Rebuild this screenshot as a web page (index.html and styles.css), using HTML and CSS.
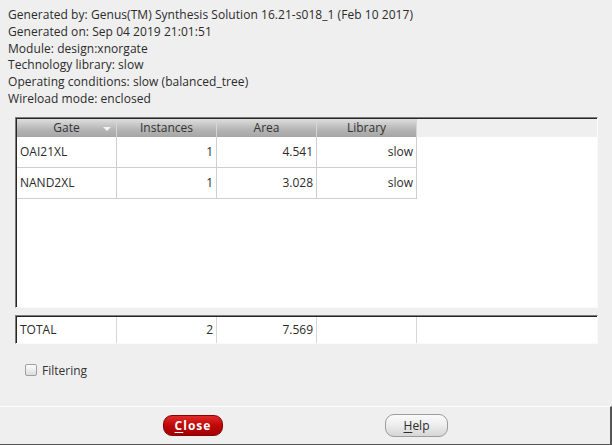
FILE: index.html
```html
<!DOCTYPE html>
<html lang="en">
<head>
    <meta charset="UTF-8">
    <title>Gate Report</title>
    <link rel="stylesheet" href="styles.css">
</head>
<body>
    <div class="dialog">
        <div class="info">
            <div>Generated by: Genus(TM) Synthesis Solution 16.21-s018_1 (Feb 10 2017)</div>
            <div>Generated on: Sep 04 2019 21:01:51</div>
            <div>Module: design:xnorgate</div>
            <div>Technology library: slow</div>
            <div>Operating conditions: slow (balanced_tree)</div>
            <div>Wireload mode: enclosed</div>
        </div>

        <div class="frame gates-frame">
            <div class="head">
                <div class="hcell">Gate<span class="sort"></span></div>
                <div class="hcell">Instances</div>
                <div class="hcell">Area</div>
                <div class="hcell">Library</div>
            </div>
            <div class="rows">
                <div class="row">
                    <div class="cell">OAI21XL</div>
                    <div class="cell num">1</div>
                    <div class="cell num">4.541</div>
                    <div class="cell num">slow</div>
                </div>
                <div class="row">
                    <div class="cell">NAND2XL</div>
                    <div class="cell num">1</div>
                    <div class="cell num">3.028</div>
                    <div class="cell num">slow</div>
                </div>
            </div>
        </div>

        <div class="frame total-frame">
            <div class="row total">
                <div class="cell">TOTAL</div>
                <div class="cell num">2</div>
                <div class="cell num">7.569</div>
                <div class="cell"></div>
                <div class="cell rest"></div>
            </div>
        </div>

        <label class="filter"><span class="check"></span>Filtering</label>

        <div class="buttons">
            <button class="btn close"><u>C</u>lose</button>
            <button class="btn help"><u>H</u>elp</button>
        </div>
    </div>
</body>
</html>
```

FILE: styles.css
```css
html, body {
    margin: 0;
    background: #efefef;
}
body {
    font-family: 'Open Sans', 'Noto Sans', sans-serif;
    font-size: 12px;
    color: #2b2b2b;
    width: 612px;
    height: 445px;
    overflow: hidden;
}
.dialog {
    display: flex;
    flex-direction: column;
    height: 445px;
}
.info {
    padding: 7px 0 0 8px;
    line-height: 16.8px;
    height: 103px;
    letter-spacing: 0.05px;
}
.frame {
    margin-left: 15px;
    width: 583px;
    box-sizing: border-box;
    border-top: 1px solid #7c7c7c;
    border-left: 1px solid #7c7c7c;
    border-right: 1px solid #fafafa;
    border-bottom: 1px solid #fafafa;
    box-shadow: inset 1px 1px 0 #262626;
}
.gates-frame {
    margin-top: 7px;
    height: 191px;
    display: flex;
    flex-direction: column;
    padding: 1px 0 0 1px;
}
.head {
    display: flex;
    height: 18px;
    flex-shrink: 0;
}
.hcell {
    width: 100px;
    box-sizing: border-box;
    text-align: center;
    line-height: 18px;
    color: #333;
    background: linear-gradient(#dedede, #b4b4b4 60%, #a6a6a6);
    border-right: 1px solid #d6d6d6;
    position: relative;
}
.sort {
    position: absolute;
    right: 5px;
    top: 8px;
    width: 0;
    height: 0;
    border-left: 4px solid transparent;
    border-right: 4px solid transparent;
    border-top: 4px solid #f4f4f4;
}
.rows {
    flex: 1;
    background: #fff;
}
.row {
    display: flex;
    height: 31px;
}
.cell {
    width: 100px;
    box-sizing: border-box;
    padding: 0 3px;
    line-height: 30px;
    border-right: 1px solid #cfcfcf;
    border-bottom: 1px solid #cfcfcf;
    white-space: nowrap;
}
.num {
    text-align: right;
}
.total-frame {
    margin-top: 7px;
    height: 29px;
    padding: 1px 0 0 1px;
    background: #fff;
}
.row.total {
    height: 26px;
}
.total .cell {
    line-height: 26px;
    border-bottom: none;
    border-right-color: #d6d6d6;
}
.total .rest {
    flex: 1;
    border-right: none;
}
.filter {
    display: flex;
    align-items: center;
    margin: 20px 0 0 25px;
    height: 12px;
    color: #333;
}
.check {
    width: 10px;
    height: 10px;
    margin-right: 5px;
    border: 1px solid #a0a0a0;
    border-radius: 2px;
    background: linear-gradient(#fdfdfd, #dcdcdc);
}
.buttons {
    margin-top: auto;
    height: 39px;
    box-sizing: border-box;
    border-top: 1px solid #fdfdfd;
    border-right: 2px solid #555;
    border-bottom: 1px solid #555;
    display: flex;
    align-items: center;
    padding-left: 163px;
    gap: 162px;
}
.btn {
    font-family: 'Open Sans', 'Noto Sans', sans-serif;
    font-size: 12px;
    border-radius: 9px;
    padding: 0;
    cursor: pointer;
}
.btn u {
    text-decoration-thickness: 1px;
    text-underline-offset: 2px;
}
.close {
    width: 60px;
    height: 21px;
    color: #fff;
    font-weight: bold;
    letter-spacing: 1px;
    border: 1px solid #8a0000;
    background: linear-gradient(#e02a2a, #c00808 50%, #a00000);
}
.help {
    width: 63px;
    height: 23px;
    color: #2b2b2b;
    border: 1px solid #9c9c9c;
    background: linear-gradient(#fbfbfb, #ececec 50%, #d6d6d6);
}
```
